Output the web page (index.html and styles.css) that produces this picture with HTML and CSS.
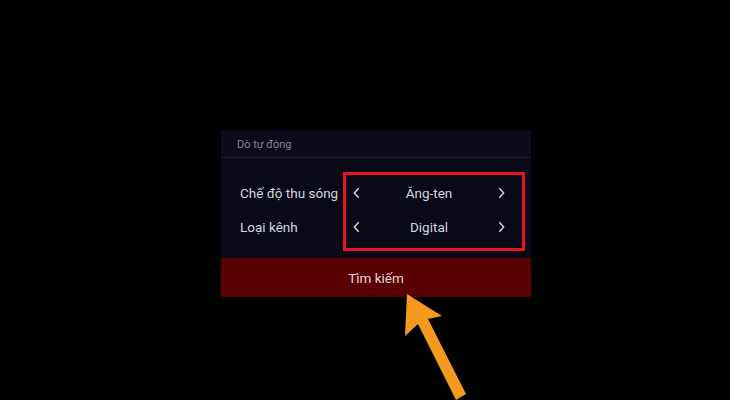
FILE: index.html
```html
<!DOCTYPE html>
<html lang="vi">
<head>
  <meta charset="UTF-8" />
  <meta name="viewport" content="width=device-width, initial-scale=1.0"/>
  <title>Dò tự động</title>
  <link rel="stylesheet" href="styles.css">
</head>
<body>
  <div class="panel">
    <div class="panel-head">Dò tự động</div>
    <div class="panel-body">
      <div class="labels">
        <div class="row">Chế độ thu sóng</div>
        <div class="row">Loại kênh</div>
      </div>
      <div class="selectors">
        <div class="row picker">
          <svg class="chev" viewBox="0 0 8 13"><polyline points="6.5,1 1.5,6.5 6.5,12"/></svg>
          <span class="value">Ăng-ten</span>
          <svg class="chev" viewBox="0 0 8 13"><polyline points="1.5,1 6.5,6.5 1.5,12"/></svg>
        </div>
        <div class="row picker">
          <svg class="chev" viewBox="0 0 8 13"><polyline points="6.5,1 1.5,6.5 6.5,12"/></svg>
          <span class="value">Digital</span>
          <svg class="chev" viewBox="0 0 8 13"><polyline points="1.5,1 6.5,6.5 1.5,12"/></svg>
        </div>
      </div>
    </div>
    <button class="search-btn">Tìm kiếm</button>
  </div>

  <!-- mũi tên chỉ vào nút tìm kiếm -->
  <svg class="pointer" viewBox="0 0 730 400">
    <path d="M407 294 L442 316 L428 319 L466 394 L456 400 L418 324 L405 336 Z"/>
  </svg>
</body>
</html>
```

FILE: styles.css
```css
body { margin: 0; background: #000; height: 400px; overflow: hidden; font-family: Roboto, "Liberation Sans", sans-serif; position: relative; }
.panel { width: 310px; margin: 130px 0 0 221px; background: #090918; }
.panel-head { height: 27px; line-height: 30px; padding-left: 16px; font-size: 11px; color: #85858f; background: #0b0b1c; border-bottom: 1px solid #1c1c2a; }
.panel-body { display: flex; padding: 14px 6px 7px 19px; }
.labels { width: 103px; padding-top: 3px; }
.row { height: 34px; padding-top: 2px; box-sizing: border-box; display: flex; align-items: center; font-size: 13.5px; color: #d6d6dc; }
.selectors { flex: 1; border: 3px solid #e8131b; padding-bottom: 5px; }
.picker { padding: 2px 17px 0 7px; }
.chev { width: 7px; height: 12px; fill: none; stroke: #dcdce2; stroke-width: 1.6; }
.value { flex: 1; text-align: center; }
.search-btn { display: block; width: 310px; height: 39px; border: none; background: #5b0002; color: #e2d6d6; font-family: inherit; font-size: 13.5px; padding: 0; }
.pointer { position: absolute; left: 0; top: 0; width: 730px; height: 400px; fill: #f59a1e; pointer-events: none; }
```
